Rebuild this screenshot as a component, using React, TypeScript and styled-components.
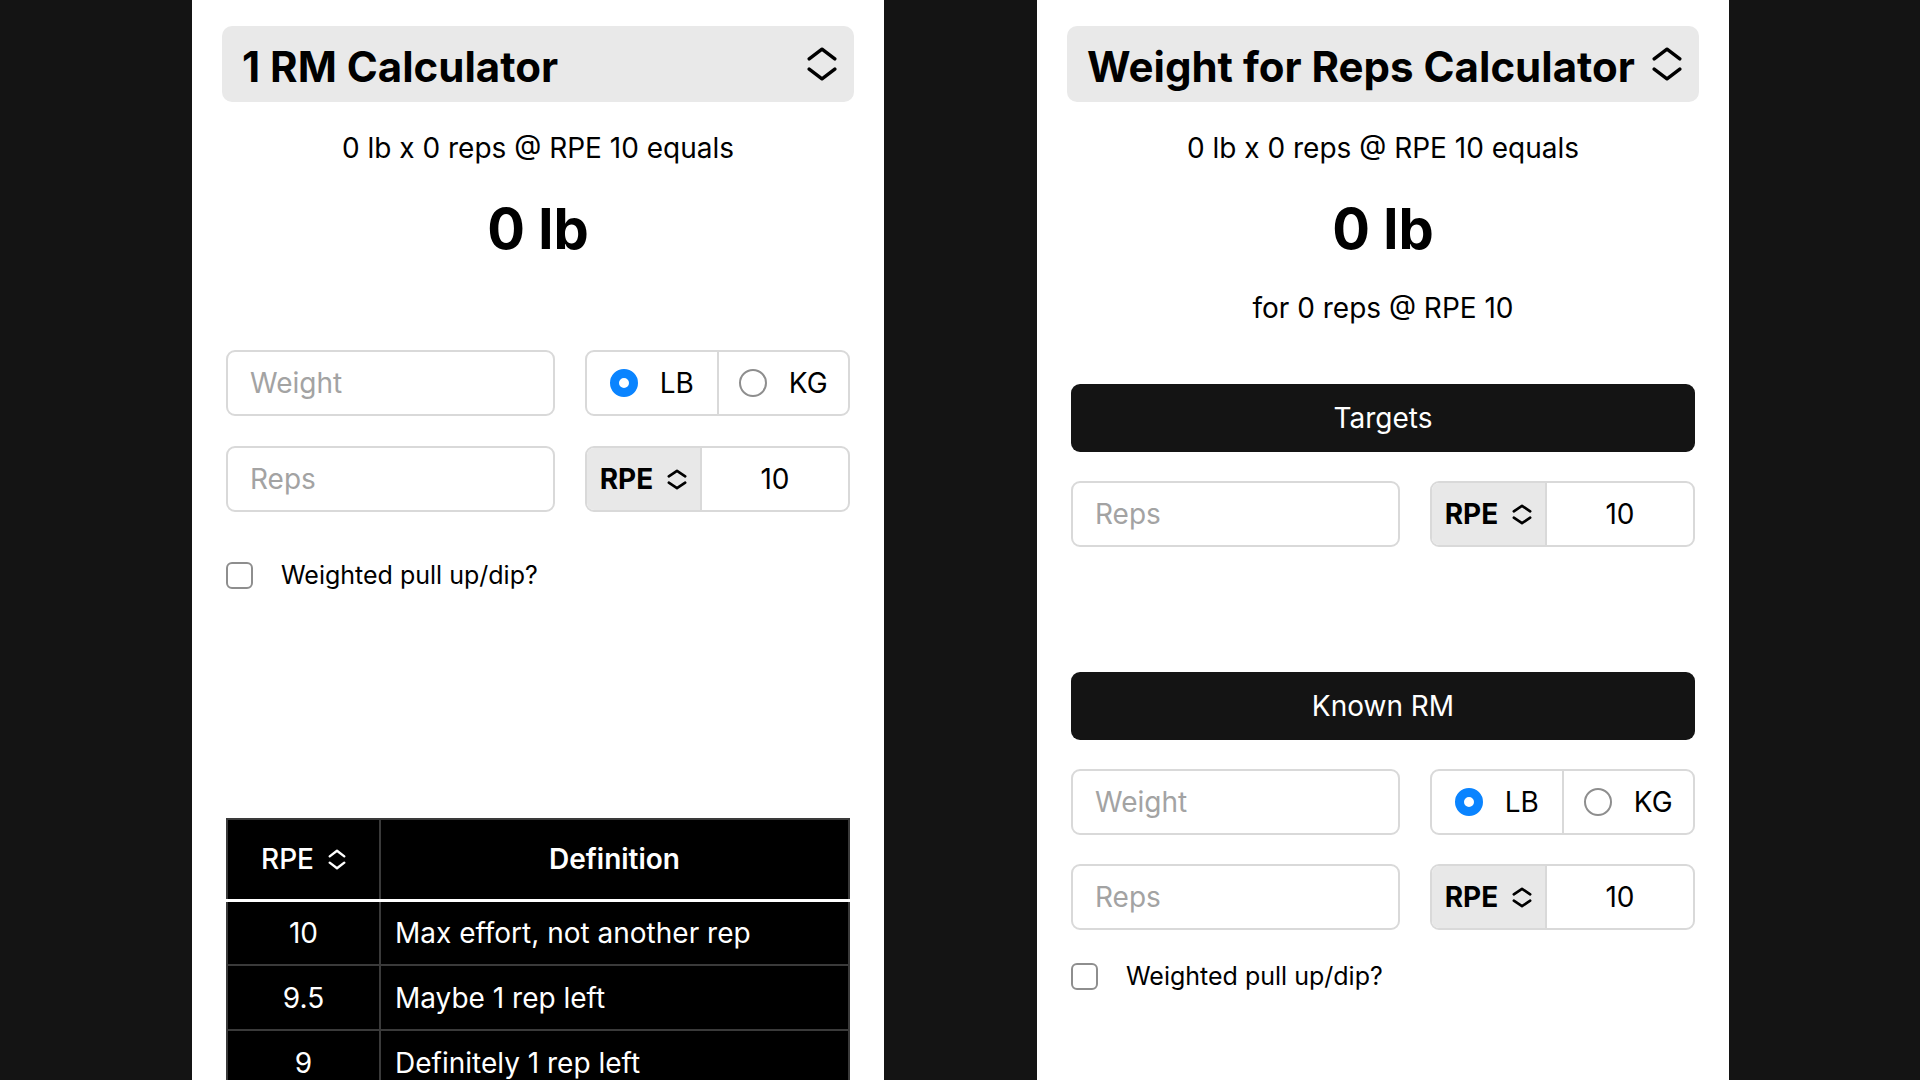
import React from 'react'
import styled, { createGlobalStyle } from 'styled-components'

const GlobalStyle = createGlobalStyle`
  html, body {
    margin: 0;
    padding: 0;
    height: 100%;
    overflow: hidden;
    background: #141414;
  }
  * {
    box-sizing: border-box;
  }
  body {
    font-family: Inter, "Noto Sans", sans-serif;
    color: #000;
  }
`

const Page = styled.div`
  display: flex;
  gap: 153px;
  height: 100vh;
  padding-left: 192px;
`

const Panel = styled.section`
  display: flex;
  flex-direction: column;
  flex-shrink: 0;
  width: 692px;
  padding: 26px 30px 0;
  background: #fff;
  overflow: hidden;

  & > * {
    flex-shrink: 0;
  }
`

const Picker = styled.div`
  display: flex;
  align-items: center;
  justify-content: space-between;
  height: 76px;
  padding: 0 17px 0 20px;
  background: #e9e9e9;
  border-radius: 10px;
`

const PickerTitle = styled.h1`
  margin: 0;
  padding-top: 5px;
  font-size: 42px;
  line-height: 48px;
  font-weight: 700;
  white-space: nowrap;
`

const Summary = styled.p<{ $top: number }>`
  margin: ${(p) => p.$top}px 0 0;
  font-size: 28px;
  line-height: 34px;
  text-align: center;
`

const Result = styled.div`
  margin-top: 30px;
  font-size: 56px;
  line-height: 68px;
  font-weight: 700;
  text-align: center;
`

const Body = styled.div<{ $top: number }>`
  display: flex;
  flex-direction: column;
  margin-top: ${(p) => p.$top}px;
  padding: 0 4px;

  & > * {
    flex-shrink: 0;
  }
`

const Fields = styled.div<{ $gap: number }>`
  display: flex;
  flex-direction: column;
  gap: ${(p) => p.$gap}px;
`

const FieldRow = styled.div`
  display: grid;
  grid-template-columns: 1fr 265px;
  column-gap: 30px;
`

const TextField = styled.input`
  width: 100%;
  height: 66px;
  padding: 0 22px;
  border: 2px solid #d9d9d9;
  border-radius: 9px;
  background: #fff;
  font-family: inherit;
  font-size: 28px;
  color: #000;
  outline: none;

  &::placeholder {
    color: #a3a3a3;
  }
`

const Segmented = styled.div`
  display: flex;
  height: 66px;
  border: 2px solid #d9d9d9;
  border-radius: 9px;
  overflow: hidden;
`

const UnitOption = styled.label`
  flex: 1;
  display: flex;
  align-items: center;
  justify-content: center;
  gap: 22px;
  font-size: 28px;

  & + & {
    border-left: 2px solid #d9d9d9;
  }
`

const RadioDot = styled.span<{ $checked?: boolean }>`
  width: 28px;
  height: 28px;
  border-radius: 50%;
  background: #fff;
  border: ${(p) => (p.$checked ? '9px solid #0a84ff' : '2px solid #8e8e8e')};
`

const RpeGroup = styled.div`
  display: grid;
  grid-template-columns: 115px 1fr;
  height: 66px;
  border: 2px solid #d9d9d9;
  border-radius: 9px;
  overflow: hidden;
`

const RpeSelect = styled.div`
  display: flex;
  align-items: center;
  justify-content: center;
  gap: 14px;
  background: #e8e8e8;
  border-right: 2px solid #d9d9d9;
  font-size: 28px;
  font-weight: 700;
`

const RpeValue = styled.div`
  display: flex;
  align-items: center;
  justify-content: center;
  font-size: 28px;
`

const CheckRow = styled.label<{ $top: number }>`
  display: flex;
  align-items: center;
  gap: 28px;
  margin-top: ${(p) => p.$top}px;
  font-size: 25px;
`

const CheckBox = styled.span`
  width: 27px;
  height: 27px;
  border: 2px solid #8e8e8e;
  border-radius: 6px;
`

const SectionBar = styled.div`
  display: flex;
  align-items: center;
  justify-content: center;
  height: 68px;
  background: #141414;
  border-radius: 9px;
  color: #fff;
  font-size: 28px;
  font-weight: 400;
`

const Spacer = styled.div<{ $h: number }>`
  height: ${(p) => p.$h}px;
`

const RpeTable = styled.table`
  width: 100%;
  margin-top: 228px;
  border-collapse: collapse;
  background: #000;
  color: #fff;
  font-size: 28px;

  th,
  td {
    border: 2px solid #3a3a3a;
  }

  th {
    height: 81px;
    border-bottom: 3px solid #fff;
    font-weight: 600;
  }

  th:first-child {
    width: 153px;
    font-weight: 500;
  }

  td {
    height: 65px;
    padding: 0 14px;
  }

  td:first-child {
    text-align: center;
  }
`

const SortButton = styled.span`
  display: inline-flex;
  align-items: center;
  gap: 14px;
`

function Chevrons({ w, h, sw }: { w: number; h: number; sw: number }) {
  const pad = sw / 2 + 0.5
  const mid = h / 2
  const gap = h * 0.15
  return (
    <svg width={w} height={h} viewBox={`0 0 ${w} ${h}`} fill="none" stroke="currentColor" strokeWidth={sw} strokeLinecap="round" strokeLinejoin="round">
      <polyline points={`${pad},${mid - gap} ${w / 2},${pad} ${w - pad},${mid - gap}`} />
      <polyline points={`${pad},${mid + gap} ${w / 2},${h - pad} ${w - pad},${mid + gap}`} />
    </svg>
  )
}

function UnitSwitch() {
  return (
    <Segmented>
      <UnitOption>
        <RadioDot $checked />
        LB
      </UnitOption>
      <UnitOption>
        <RadioDot />
        KG
      </UnitOption>
    </Segmented>
  )
}

function RpeField() {
  return (
    <RpeGroup>
      <RpeSelect>
        RPE
        <Chevrons w={20} h={21} sw={2.6} />
      </RpeSelect>
      <RpeValue>10</RpeValue>
    </RpeGroup>
  )
}

const rpeRows = [
  ['10', 'Max effort, not another rep'],
  ['9.5', 'Maybe 1 rep left'],
  ['9', 'Definitely 1 rep left'],
]

function OneRepMax() {
  return (
    <Panel>
      <Picker>
        <PickerTitle>1 RM Calculator</PickerTitle>
        <Chevrons w={30} h={34} sw={3.4} />
      </Picker>
      <Summary $top={29}>0 lb x 0 reps @ RPE 10 equals</Summary>
      <Result>0 lb</Result>
      <Body $top={87}>
        <Fields $gap={30}>
          <FieldRow>
            <TextField placeholder="Weight" />
            <UnitSwitch />
          </FieldRow>
          <FieldRow>
            <TextField placeholder="Reps" />
            <RpeField />
          </FieldRow>
        </Fields>
        <CheckRow $top={48}>
          <CheckBox />
          Weighted pull up/dip?
        </CheckRow>
        <RpeTable>
          <thead>
            <tr>
              <th>
                <SortButton>
                  RPE
                  <Chevrons w={18} h={21} sw={2.4} />
                </SortButton>
              </th>
              <th>Definition</th>
            </tr>
          </thead>
          <tbody>
            {rpeRows.map(([rpe, text]) => (
              <tr key={rpe}>
                <td>{rpe}</td>
                <td>{text}</td>
              </tr>
            ))}
          </tbody>
        </RpeTable>
      </Body>
    </Panel>
  )
}

function WeightForReps() {
  return (
    <Panel>
      <Picker>
        <PickerTitle>Weight for Reps Calculator</PickerTitle>
        <Chevrons w={30} h={34} sw={3.4} />
      </Picker>
      <Summary $top={29}>0 lb x 0 reps @ RPE 10 equals</Summary>
      <Result>0 lb</Result>
      <Summary $top={28}>for 0 reps @ RPE 10</Summary>
      <Body $top={59}>
        <SectionBar>Targets</SectionBar>
        <Spacer $h={29} />
        <FieldRow>
          <TextField placeholder="Reps" />
          <RpeField />
        </FieldRow>
        <Spacer $h={125} />
        <SectionBar>Known RM</SectionBar>
        <Spacer $h={29} />
        <Fields $gap={29}>
          <FieldRow>
            <TextField placeholder="Weight" />
            <UnitSwitch />
          </FieldRow>
          <FieldRow>
            <TextField placeholder="Reps" />
            <RpeField />
          </FieldRow>
        </Fields>
        <CheckRow $top={31}>
          <CheckBox />
          Weighted pull up/dip?
        </CheckRow>
      </Body>
    </Panel>
  )
}

export default function App() {
  return (
    <>
      <GlobalStyle />
      <Page>
        <OneRepMax />
        <WeightForReps />
      </Page>
    </>
  )
}
